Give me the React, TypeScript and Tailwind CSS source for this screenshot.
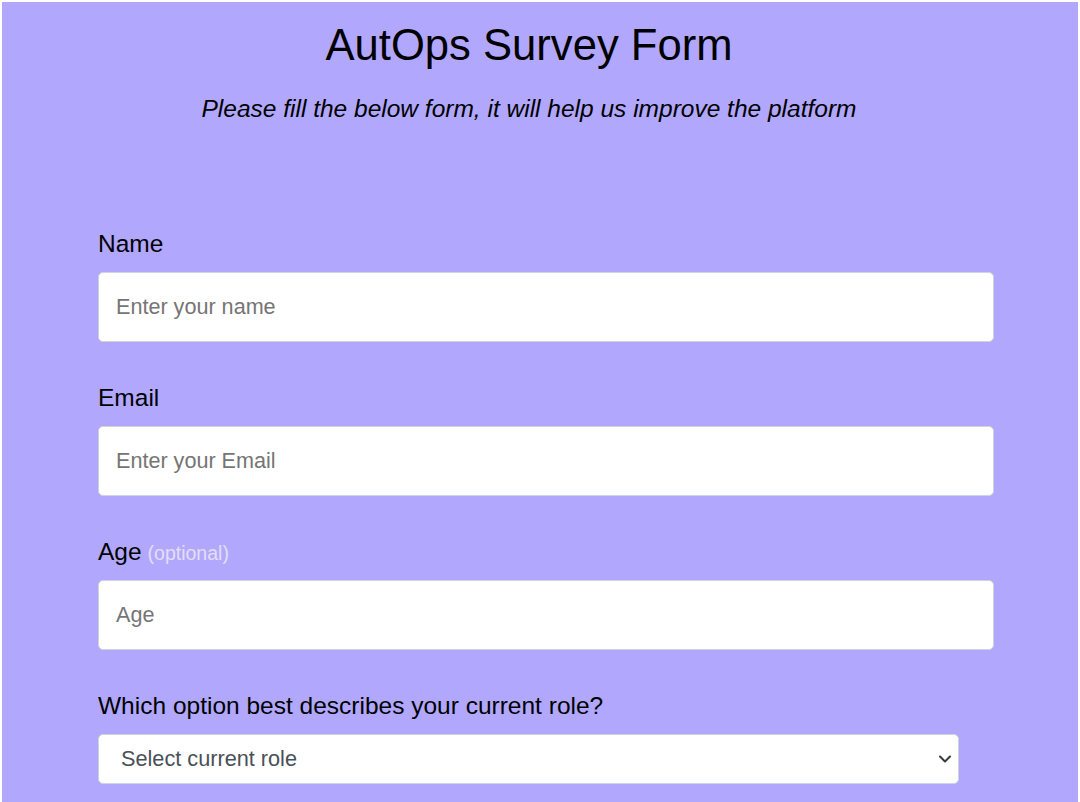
import React from "react";

function Field({
  label,
  hint,
  placeholder,
  type = "text",
}: {
  label: string;
  hint?: string;
  placeholder: string;
  type?: string;
}) {
  return (
    <div className="mb-[42px]">
      <label className="block text-[24.5px] leading-[28px] text-black mb-[14px]">
        {label}
        {hint && <span className="ml-[6px] text-[19.5px] leading-none text-[#e2dff4]">{hint}</span>}
      </label>
      <input
        type={type}
        placeholder={placeholder}
        className="block w-[896px] h-[70px] rounded-[5px] border border-[#ced4da] bg-white px-[17px] text-[21.6px] text-[#495057] placeholder:text-[#757575] outline-none"
      />
    </div>
  );
}

export default function App() {
  return (
    <div className="min-h-[802px] bg-white px-[2px] pt-[2px] font-['Liberation_Sans',Arial,sans-serif]">
      <main className="min-h-[800px] bg-[#b1a8fe]">
        <header className="pr-[22px] pt-[18px] text-center">
          <h1 className="text-[43.6px] leading-[50px] text-black">AutOps Survey Form</h1>
          <p className="mt-[24px] text-[24.5px] leading-[30px] italic text-black">
            Please fill the below form, it will help us improve the platform
          </p>
        </header>

        <form className="pl-[96px] pt-[106px]">
          <Field label="Name" placeholder="Enter your name" />
          <Field label="Email" placeholder="Enter your Email" type="email" />
          <Field label="Age" hint="(optional)" placeholder="Age" type="number" />

          <div>
            <label className="block text-[24.5px] leading-[28px] text-black mb-[14px]">
              Which option best describes your current role?
            </label>
            <div className="relative w-[861px]">
              <select
                defaultValue=""
                className="block w-full h-[50px] appearance-none rounded-[5px] border border-[#ced4da] bg-white pl-[22px] text-[21.7px] text-[#495057] outline-none"
              >
                <option value="" disabled>
                  Select current role
                </option>
                <option>Student</option>
                <option>Full Time Job</option>
                <option>Full Time Learner</option>
                <option>Prefer not to say</option>
                <option>Other</option>
              </select>
              <svg
                className="pointer-events-none absolute right-[8px] top-[21px]"
                width="12"
                height="8"
                viewBox="0 0 12 8"
                fill="none"
              >
                <path d="M1 1.5l5 5 5-5" stroke="#343a40" strokeWidth="2" strokeLinecap="round" strokeLinejoin="round" />
              </svg>
            </div>
          </div>
        </form>
      </main>
    </div>
  );
}
